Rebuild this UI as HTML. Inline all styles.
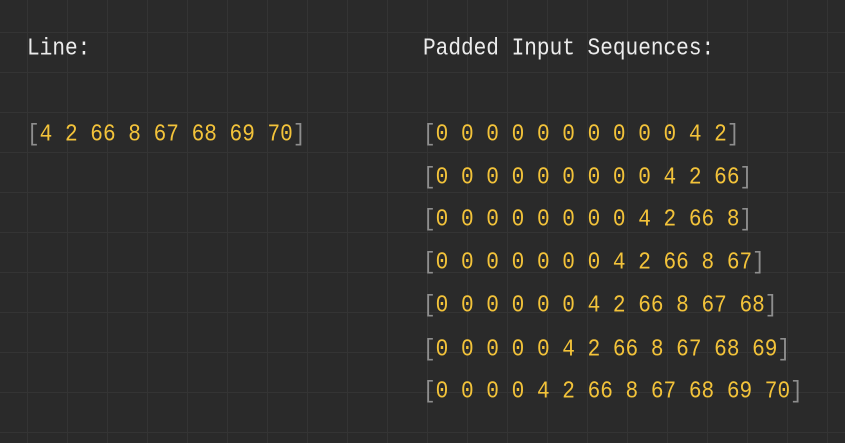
<!DOCTYPE html>
<html><head><style>
html,body{margin:0;padding:0}
body{width:845px;height:443px;overflow:hidden;background-color:#2a2a2a;
background-image:linear-gradient(to right,#343434 1px,transparent 1px),linear-gradient(to bottom,#343434 1px,transparent 1px);
background-size:40px 40px;background-position:27px 32px;position:relative;
font-family:"Liberation Mono",monospace;font-size:21.1px;}
.t{position:absolute;white-space:pre;line-height:24px;transform:scaleY(1.12);transform-origin:0 50%;}
.w{color:#ececec}
.y{color:#f3c33a}
.b{color:#8e8e8e}
</style></head><body>
<div class="t w" style="left:27px;top:37px">Line:</div>
<div class="t w" style="left:423px;top:37px">Padded Input Sequences:</div>
<div class="t" style="left:27px;top:123px"><span class="b">[</span><span class="y">4 2 66 8 67 68 69 70</span><span class="b">]</span></div>
<div class="t" style="left:423px;top:123px"><span class="b">[</span><span class="y">0 0 0 0 0 0 0 0 0 0 4 2</span><span class="b">]</span></div>
<div class="t" style="left:423px;top:166px"><span class="b">[</span><span class="y">0 0 0 0 0 0 0 0 0 4 2 66</span><span class="b">]</span></div>
<div class="t" style="left:423px;top:208px"><span class="b">[</span><span class="y">0 0 0 0 0 0 0 0 4 2 66 8</span><span class="b">]</span></div>
<div class="t" style="left:423px;top:251px"><span class="b">[</span><span class="y">0 0 0 0 0 0 0 4 2 66 8 67</span><span class="b">]</span></div>
<div class="t" style="left:423px;top:294px"><span class="b">[</span><span class="y">0 0 0 0 0 0 4 2 66 8 67 68</span><span class="b">]</span></div>
<div class="t" style="left:423px;top:338px"><span class="b">[</span><span class="y">0 0 0 0 0 4 2 66 8 67 68 69</span><span class="b">]</span></div>
<div class="t" style="left:423px;top:380px"><span class="b">[</span><span class="y">0 0 0 0 4 2 66 8 67 68 69 70</span><span class="b">]</span></div>
</body></html>
